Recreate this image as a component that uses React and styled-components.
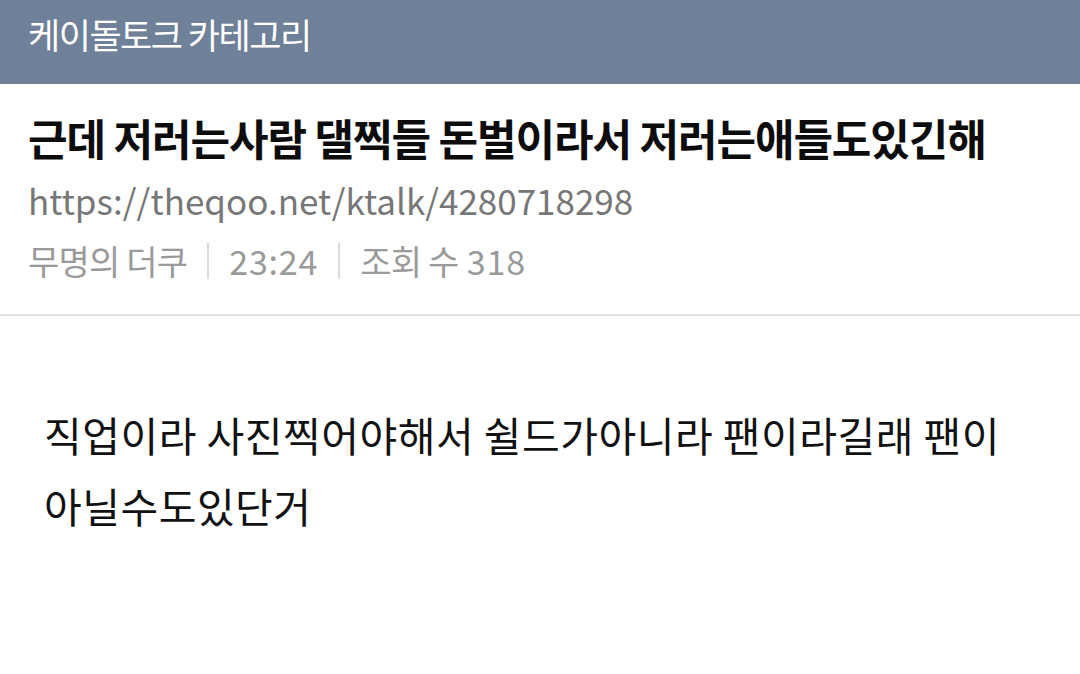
import styled, { createGlobalStyle } from 'styled-components';

const GlobalStyle = createGlobalStyle`
html, body {
  margin: 0;
  padding: 0;
  background: #fff;
}
body {
  font-family: "Noto Sans CJK KR", "Noto Sans", sans-serif;
}
`;

const Page = styled.div`
display: flex;
flex-direction: column;
width: 1080px;
height: 674px;
overflow: hidden;
`;

const CategoryBar = styled.div`
display: flex;
align-items: center;
height: 84px;
padding: 0 28px 18px;
box-sizing: border-box;
background-color: #6f8099;
color: #fff;
font-size: 35px;
letter-spacing: -1.5px;
`;

const PostHead = styled.div`
display: flex;
flex-direction: column;
padding: 25px 28px 0;
border-bottom: 2px solid #e2e2e2;
height: 232px;
box-sizing: border-box;
`;

const Title = styled.div`
font-size: 43px;
font-weight: bold;
color: #0c0c0c;
letter-spacing: -1.1px;
line-height: 56px;
white-space: nowrap;
`;

const Link = styled.div`
margin-top: 4px;
font-size: 35px;
color: #777;
line-height: 62px;
`;

const Meta = styled.div`
display: flex;
align-items: center;
font-size: 34px;
color: #9a9a9a;
line-height: 60px;
letter-spacing: -0.8px;
`;

const Num = styled.span`
letter-spacing: 0.8px;
`;

const Divider = styled.span`
width: 2px;
height: 36px;
margin: 0 20px;
background-color: #dcdcdc;
`;

const Body = styled.div`
padding: 83px 44px 0;
font-size: 41px;
color: #111;
line-height: 71px;
letter-spacing: 0.5px;
white-space: nowrap;
`;

function App() {
  return (
    <Page>
      <GlobalStyle />
      <CategoryBar>케이돌토크 카테고리</CategoryBar>
      <PostHead>
        <Title>근데 저러는사람 댈찍들 돈벌이라서 저러는애들도있긴해</Title>
        <Link>https://theqoo.net/ktalk/4280718298</Link>
        <Meta>
          무명의 더쿠
          <Divider />
          <Num>23:24</Num>
          <Divider />
          조회 수 <Num>&nbsp;318</Num>
        </Meta>
      </PostHead>
      <Body>
        직업이라 사진찍어야해서 쉴드가아니라 팬이라길래 팬이
        <br />
        아닐수도있단거
      </Body>
    </Page>
  );
}

export default App;
